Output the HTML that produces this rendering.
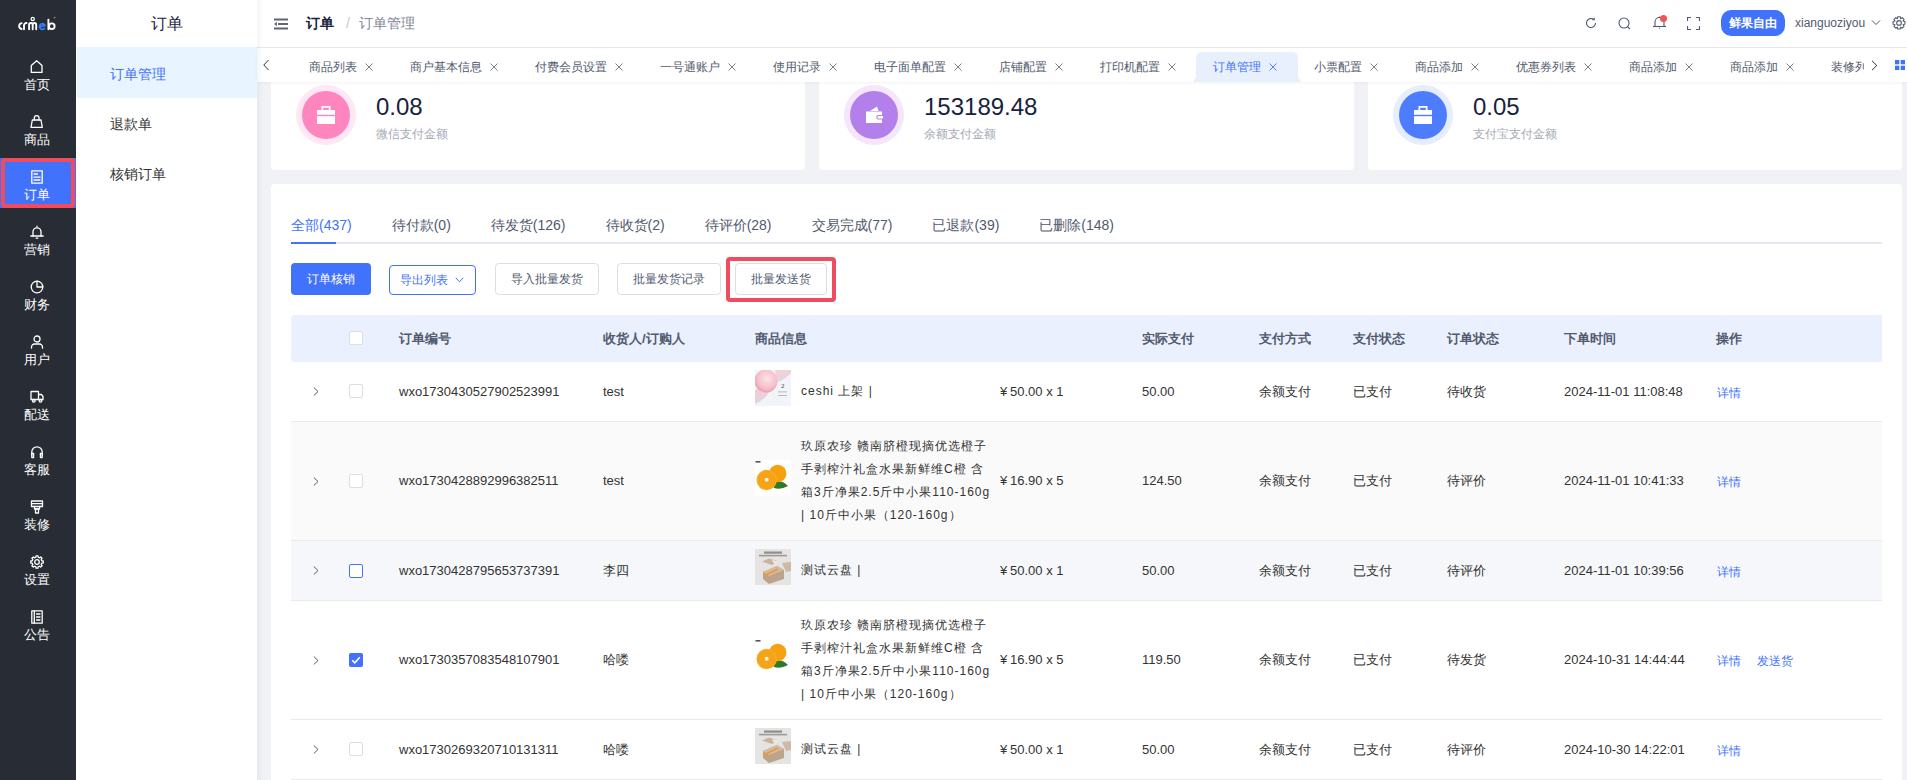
<!DOCTYPE html>
<html><head><meta charset="utf-8">
<style>
*{box-sizing:border-box;margin:0;padding:0}
html,body{width:1907px;height:780px;overflow:hidden;background:#f0f2f5;font-family:"Liberation Sans",sans-serif;color:#333}
.a{position:absolute;white-space:nowrap}
#sb{position:absolute;left:0;top:0;width:76px;height:780px;background:#282c34}
.si{position:absolute;left:0;width:76px;text-align:center;color:#fff;font-size:13px;line-height:16px;font-weight:500}
.si svg{position:absolute;left:30px;top:0;width:14px;height:14px}
.si span{position:absolute;left:-1px;width:76px;top:17px}
#sub{position:absolute;left:76px;top:0;width:181px;height:780px;background:#fff}
#hdr{position:absolute;left:257px;top:0;width:1650px;height:48px;background:#fff;border-bottom:1px solid #e8eaec}
#tabs{position:absolute;left:257px;top:48px;width:1650px;height:34px;background:#fff;box-shadow:0 1px 3px rgba(0,0,0,.05)}
.tb{position:absolute;top:9px;font-size:12px;line-height:20px;color:#515a6e}
.th{font-size:13px;line-height:20px;font-weight:bold;color:#515a6e}
.td{font-size:13px;line-height:20px;color:#333}
.lk{font-size:12px;line-height:20px;color:#4172fb}
.pn{font-size:12px;line-height:23.2px;letter-spacing:1px;color:#333}
.img-pink{background:linear-gradient(135deg,#f3b9c6 0%,#f7d2db 45%,#eef2f7 60%,#f3f5f9 100%)}
.img-orange{background:radial-gradient(circle at 62% 45%,#f7a21b 0,#f39c12 11px,transparent 12px),radial-gradient(circle at 38% 58%,#ffd56a 0,#f4a81d 10px,transparent 11px),#fff}
.img-box{background:linear-gradient(160deg,#d9d4cc 0%,#cfc6b8 40%,#b59a78 60%,#d6d0c6 100%)}
.card{position:absolute;background:#fff;border-radius:4px}
</style></head><body>

<!-- left dark sidebar -->
<div id="sb">
  <svg class="a" style="left:0;top:0" width="76" height="40" viewBox="0 0 76 40" fill="none" stroke="#fff" stroke-width="1.9" stroke-linecap="round">
    <path d="M21.6 23.1A3 3 0 0 0 21.6 29"/>
    <path d="M24 29.2V25.3A2.4 2.4 0 0 1 26.5 23"/>
    <path d="M29.1 29.2V24.8A1.8 1.8 0 0 1 32.7 24.8V29.2M32.7 24.8A1.75 1.75 0 0 1 36.2 24.8V29.2"/>
    <circle cx="32.7" cy="18.9" r="1.6" stroke-width="1.3"/>
    <path d="M40 26.9L44.9 25.4A2.8 2.8 0 1 0 44.5 28.4" stroke="#2f7ff6"/>
    <path d="M48.4 19.6V29.2"/><circle cx="51.8" cy="26.2" r="2.8"/>
    <circle cx="54.6" cy="17.6" r="0.9" fill="#888" stroke="none"/>
  </svg>
<div class="a" style="left:0;top:158px;width:76px;height:50px;background:#4172fb"></div>
<div class="si" style="top:60px"><svg width="14" height="14" viewBox="0 0 14 14" fill="none" stroke="#fff" stroke-width="1.3" stroke-linejoin="round" stroke-linecap="round"><path d="M1.3 12.4V5.6L6.65 0.8 12 5.6V12.4Z"/></svg><span>首页</span></div>
<div class="si" style="top:115px"><svg width="14" height="14" viewBox="0 0 14 14" fill="none" stroke="#fff" stroke-width="1.3" stroke-linejoin="round" stroke-linecap="round"><path d="M2.3 5H11L12.3 12.4H1Z"/><path d="M4.3 5V3a2.35 2.35 0 0 1 4.7 0V5"/></svg><span>商品</span></div>
<div class="si" style="top:170px"><svg width="14" height="14" viewBox="0 0 14 14" fill="none" stroke="#fff" stroke-width="1.3" stroke-linejoin="round" stroke-linecap="round"><path d="M1.8 0.8H12.2V13.2H1.8Z"/><path d="M4 4H7.5M4 7.2H10M4 10H10"/></svg><span>订单</span></div>
<div class="si" style="top:225px"><svg width="14" height="14" viewBox="0 0 14 14" fill="none" stroke="#fff" stroke-width="1.3" stroke-linejoin="round" stroke-linecap="round"><path d="M3 11V6.8a4 4 0 0 1 8 0V11"/><path d="M0.8 11H13.2"/><path d="M7 1.8V1.2"/><path d="M6.2 13.2H7.8"/></svg><span>营销</span></div>
<div class="si" style="top:280px"><svg width="14" height="14" viewBox="0 0 14 14" fill="none" stroke="#fff" stroke-width="1.3" stroke-linejoin="round" stroke-linecap="round"><circle cx="7" cy="7" r="5.8"/><path d="M7 1.2V7H12.8"/></svg><span>财务</span></div>
<div class="si" style="top:335px"><svg width="14" height="14" viewBox="0 0 14 14" fill="none" stroke="#fff" stroke-width="1.3" stroke-linejoin="round" stroke-linecap="round"><circle cx="7" cy="4" r="3"/><path d="M1.5 13.2V12a3 3 0 0 1 3-3H9.5a3 3 0 0 1 3 3V13.2"/></svg><span>用户</span></div>
<div class="si" style="top:390px"><svg width="14" height="14" viewBox="0 0 14 14" fill="none" stroke="#fff" stroke-width="1.3" stroke-linejoin="round" stroke-linecap="round"><path d="M1 1.5H8.5V9.5H1Z"/><path d="M8.5 4.5H11.5L13 6.5V9.5H8.5"/><circle cx="3.8" cy="10.8" r="1.3"/><circle cx="10.5" cy="10.8" r="1.3"/></svg><span>配送</span></div>
<div class="si" style="top:445px"><svg width="14" height="14" viewBox="0 0 14 14" fill="none" stroke="#fff" stroke-width="1.3" stroke-linejoin="round" stroke-linecap="round"><path d="M1.8 10V7a5.2 5.2 0 0 1 10.4 0V10"/><path d="M1.8 8.3H3.6V12.5H1.8Z"/><path d="M10.4 8.3H12.2V12.5H10.4Z"/></svg><span>客服</span></div>
<div class="si" style="top:500px"><svg width="14" height="14" viewBox="0 0 14 14" fill="none" stroke="#fff" stroke-width="1.3" stroke-linejoin="round" stroke-linecap="round"><path d="M1.5 1H12.5V6.5H1.5Z"/><path d="M1.5 3.7H12.5"/><path d="M4.5 6.5V9H9.5V6.5"/><path d="M5.5 9H8.5V13H5.5Z"/></svg><span>装修</span></div>
<div class="si" style="top:555px"><svg width="14" height="14" viewBox="0 0 14 14" fill="none" stroke="#fff" stroke-width="1.3" stroke-linejoin="round" stroke-linecap="round"><path d="M13.22 6.01L13.22 7.99L11.76 8.14L11.18 9.56L12.10 10.70L10.70 12.10L9.56 11.18L8.14 11.76L7.99 13.22L6.01 13.22L5.86 11.76L4.44 11.18L3.30 12.10L1.90 10.70L2.82 9.56L2.24 8.14L0.78 7.99L0.78 6.01L2.24 5.86L2.82 4.44L1.90 3.30L3.30 1.90L4.44 2.82L5.86 2.24L6.01 0.78L7.99 0.78L8.14 2.24L9.56 2.82L10.70 1.90L12.10 3.30L11.18 4.44L11.76 5.86Z"/><circle cx="7" cy="7" r="2.3"/></svg><span>设置</span></div>
<div class="si" style="top:610px"><svg width="14" height="14" viewBox="0 0 14 14" fill="none" stroke="#fff" stroke-width="1.3" stroke-linejoin="round" stroke-linecap="round"><path d="M1.8 0.8H12.2V13.2H1.8Z"/><path d="M4.3 0.8V13.2"/><path d="M6.5 4H10M6.5 7H10M6.5 10H10"/></svg><span>公告</span></div>
<div class="a" style="left:1px;top:158px;width:74px;height:50px;border:4px solid #f04b5f;border-radius:4px"></div>
</div>

<!-- sub menu -->
<div id="sub">
  <div class="a" style="left:0;top:13px;width:181px;text-align:center;font-size:16px;line-height:22px;color:#17233d">订单</div>
  <div class="a" style="left:1px;top:47px;width:180px;height:51px;background:#e8f4ff"></div>
  <div class="a" style="left:34px;top:63px;font-size:14px;line-height:22px;color:#4172fb">订单管理</div>
  <div class="a" style="left:34px;top:113px;font-size:14px;line-height:22px;color:#333">退款单</div>
  <div class="a" style="left:34px;top:163px;font-size:14px;line-height:22px;color:#333">核销订单</div>
</div>

<!-- content -->
<div class="card" style="left:271px;top:40px;width:534px;height:130px"></div>
<div class="a" style="left:296px;top:85px;width:60px;height:60px;border-radius:50%;background:#ffe8f3"></div>
<div class="a" style="left:302px;top:91px;width:48px;height:48px;border-radius:50%;background:#ff85bf"></div>
<svg class="a" style="left:317px;top:106px" width="18" height="18" viewBox="0 0 18 18" fill="#fff"><path d="M4.5 0H13.5V4H11.8V1.7H6.2V4H4.5Z"/><rect x="0" y="4" width="18" height="4.8"/><rect x="0" y="10.2" width="18" height="7.8"/></svg>
<div class="a" style="left:376px;top:93px;font-size:24px;line-height:28px;color:#17233d">0.08</div>
<div class="a" style="left:376px;top:124px;font-size:12px;line-height:20px;color:#a6abb6">微信支付金额</div>
<div class="card" style="left:819px;top:40px;width:535px;height:130px"></div>
<div class="a" style="left:844px;top:85px;width:60px;height:60px;border-radius:50%;background:#f3e6fd"></div>
<div class="a" style="left:850px;top:91px;width:48px;height:48px;border-radius:50%;background:#b37feb"></div>
<svg class="a" style="left:865px;top:105px" width="19" height="19" viewBox="0 0 19 19" fill="#fff"><path d="M5 6L12 1.5L13.5 6Z"/><path d="M1 6.5H17V10H13.5a2.2 2.2 0 0 0 0 4.4H17V18H1Z"/><path d="M13.8 10.9H18V13.5H13.8a1.3 1.3 0 0 1 0-2.6Z"/></svg>
<div class="a" style="left:924px;top:93px;font-size:24px;line-height:28px;color:#17233d">153189.48</div>
<div class="a" style="left:924px;top:124px;font-size:12px;line-height:20px;color:#a6abb6">余额支付金额</div>
<div class="card" style="left:1368px;top:40px;width:534px;height:130px"></div>
<div class="a" style="left:1393px;top:85px;width:60px;height:60px;border-radius:50%;background:#e5edfe"></div>
<div class="a" style="left:1399px;top:91px;width:48px;height:48px;border-radius:50%;background:#4d7cfe"></div>
<svg class="a" style="left:1414px;top:106px" width="18" height="18" viewBox="0 0 18 18" fill="#fff"><path d="M4.5 0H13.5V4H11.8V1.7H6.2V4H4.5Z"/><rect x="0" y="4" width="18" height="4.8"/><rect x="0" y="10.2" width="18" height="7.8"/></svg>
<div class="a" style="left:1473px;top:93px;font-size:24px;line-height:28px;color:#17233d">0.05</div>
<div class="a" style="left:1473px;top:124px;font-size:12px;line-height:20px;color:#a6abb6">支付宝支付金额</div>
<div class="card" style="left:271px;top:184px;width:1631px;height:640px"></div>

<div class="a" style="left:291px;top:214px;display:flex;gap:40px;font-size:14px;line-height:22px;color:#515a6e"><span style="color:#4172fb">全部(437)</span><span style="color:#515a6e">待付款(0)</span><span style="color:#515a6e">待发货(126)</span><span style="color:#515a6e">待收货(2)</span><span style="color:#515a6e">待评价(28)</span><span style="color:#515a6e">交易完成(77)</span><span style="color:#515a6e">已退款(39)</span><span style="color:#515a6e">已删除(148)</span></div>
<div class="a" style="left:291px;top:242px;width:1591px;height:2px;background:#e4e7ed"></div>
<div class="a" style="left:291px;top:242px;width:45px;height:2px;background:#4172fb"></div>
<div class="a" style="left:291px;top:263px;width:80px;height:32px;border-radius:4px;background:#4172fb;color:#fff;font-size:12px;line-height:32px;text-align:center">订单核销</div>
<div class="a" style="left:389px;top:265px;width:87px;height:30px;border-radius:4px;border:1px solid #4172fb;color:#4172fb;font-size:12px;line-height:28px;padding-left:10px">导出列表</div>
<svg class="a" style="left:455px;top:277px" width="9" height="6" viewBox="0 0 9 6" fill="none" stroke="#4172fb" stroke-width="1"><path d="M0.8 0.8L4.5 4.8L8.2 0.8"/></svg>
<div class="a" style="left:495px;top:263px;width:104px;height:32px;border-radius:4px;border:1px solid #dcdee2;color:#515a6e;font-size:12px;line-height:30px;text-align:center">导入批量发货</div>
<div class="a" style="left:617px;top:263px;width:104px;height:32px;border-radius:4px;border:1px solid #dcdee2;color:#515a6e;font-size:12px;line-height:30px;text-align:center">批量发货记录</div>
<div class="a" style="left:735px;top:263px;width:92px;height:32px;border-radius:4px;border:1px solid #dcdee2;color:#515a6e;font-size:12px;line-height:30px;text-align:center">批量发送货</div>
<div class="a" style="left:726px;top:257px;width:110px;height:45px;border:4px solid #f04b5f;border-radius:4px"></div>
<div class="a" style="left:291px;top:315px;width:1591px;height:47px;background:#eaf0fe;border-radius:4px 0 0 4px"></div>
<div class="a" style="left:349px;top:331px;width:14px;height:14px;border-radius:2px;border:1px solid #dcdee2;background:#fff"></div>
<div class="a th" style="left:399px;top:329px">订单编号</div>
<div class="a th" style="left:603px;top:329px">收货人/订购人</div>
<div class="a th" style="left:755px;top:329px">商品信息</div>
<div class="a th" style="left:1142px;top:329px">实际支付</div>
<div class="a th" style="left:1259px;top:329px">支付方式</div>
<div class="a th" style="left:1353px;top:329px">支付状态</div>
<div class="a th" style="left:1447px;top:329px">订单状态</div>
<div class="a th" style="left:1564px;top:329px">下单时间</div>
<div class="a th" style="left:1716px;top:329px">操作</div>
<div class="a" style="left:291px;top:362px;width:1591px;height:60px;background:#fff;border-bottom:1px solid #e8eaec"></div>
<svg class="a" style="left:313px;top:387.0px" width="6" height="9" viewBox="0 0 6 9" fill="none" stroke="#515a6e" stroke-width="1"><path d="M0.8 0.5L5 4.5L0.8 8.5"/></svg>
<div class="a" style="left:349px;top:384px;width:14px;height:14px;border-radius:2px;border:1px solid #dcdee2;background:#fff"></div>
<div class="a td" style="left:399px;top:381.5px">wxo1730430527902523991</div>
<div class="a td" style="left:603px;top:381.5px">test</div>
<div class="a td" style="left:1142px;top:381.5px">50.00</div>
<div class="a td" style="left:1259px;top:381.5px">余额支付</div>
<div class="a td" style="left:1353px;top:381.5px">已支付</div>
<div class="a td" style="left:1447px;top:381.5px">待收货</div>
<div class="a td" style="left:1564px;top:381.5px">2024-11-01 11:08:48</div>
<div class="a td" style="left:1000px;top:381.5px">¥</div><div class="a td" style="left:1010px;top:381.5px">50.00 x 1</div>
<div class="a lk" style="left:1717px;top:382.5px">详情</div>
<div class="a" style="left:755px;top:370.0px;width:36px;height:36px"><svg width="36" height="36" viewBox="0 0 36 36"><defs><radialGradient id="pg" cx="0.55" cy="0.4" r="0.6"><stop offset="0" stop-color="#fde2e8"/><stop offset="0.7" stop-color="#f6bfcb"/><stop offset="1" stop-color="#e9a0b0"/></radialGradient></defs><rect width="36" height="36" fill="#f1f5fa"/><path d="M20 0H36V3Q30 10 22 12Z" fill="#ecd3da"/><path d="M0 20Q8 17 14 22Q10 30 0 34Z" fill="#ecd0d8"/><circle cx="11" cy="11" r="11.5" fill="url(#pg)"/><text x="26" y="18" font-family="Liberation Serif" font-size="7" fill="#444">2</text><rect x="23" y="21.5" width="9" height="0.8" fill="#aaa"/><rect x="23" y="25" width="9" height="0.8" fill="#aaa"/></svg></div>
<div class="a pn" style="left:801px;top:379.9px">ceshi 上架 |</div>
<div class="a" style="left:291px;top:422px;width:1591px;height:119px;background:#fafafa;border-bottom:1px solid #e8eaec"></div>
<svg class="a" style="left:313px;top:476.5px" width="6" height="9" viewBox="0 0 6 9" fill="none" stroke="#515a6e" stroke-width="1"><path d="M0.8 0.5L5 4.5L0.8 8.5"/></svg>
<div class="a" style="left:349px;top:474px;width:14px;height:14px;border-radius:2px;border:1px solid #dcdee2;background:#fff"></div>
<div class="a td" style="left:399px;top:471.0px">wxo1730428892996382511</div>
<div class="a td" style="left:603px;top:471.0px">test</div>
<div class="a td" style="left:1142px;top:471.0px">124.50</div>
<div class="a td" style="left:1259px;top:471.0px">余额支付</div>
<div class="a td" style="left:1353px;top:471.0px">已支付</div>
<div class="a td" style="left:1447px;top:471.0px">待评价</div>
<div class="a td" style="left:1564px;top:471.0px">2024-11-01 10:41:33</div>
<div class="a td" style="left:1000px;top:471.0px">¥</div><div class="a td" style="left:1010px;top:471.0px">16.90 x 5</div>
<div class="a lk" style="left:1717px;top:472.0px">详情</div>
<div class="a" style="left:755px;top:459.5px;width:36px;height:36px"><svg width="36" height="36" viewBox="0 0 36 36"><rect width="36" height="36" fill="#fff"/><rect x="0.5" y="1" width="5" height="1.6" fill="#555"/><path d="M19 23Q26 19 33 26Q26 30 19 28Z" fill="#2f7a2a"/><circle cx="22.7" cy="13.5" r="8.7" fill="#f6a10f"/><circle cx="11.7" cy="20" r="10.2" fill="#f7b21e"/><circle cx="11.7" cy="20" r="9.2" fill="#f5a31a"/><circle cx="11.7" cy="19.8" r="2" fill="#fff3cf"/></svg></div>
<div class="a pn" style="left:801px;top:434.6px">玖原农珍 赣南脐橙现摘优选橙子<br>手剥榨汁礼盒水果新鲜维C橙 含<br>箱3斤净果2.5斤中小果110-160g<br>| 10斤中小果（120-160g）</div>
<div class="a" style="left:291px;top:541px;width:1591px;height:60px;background:#f5f7fa;border-bottom:1px solid #e8eaec"></div>
<svg class="a" style="left:313px;top:566.0px" width="6" height="9" viewBox="0 0 6 9" fill="none" stroke="#515a6e" stroke-width="1"><path d="M0.8 0.5L5 4.5L0.8 8.5"/></svg>
<div class="a" style="left:349px;top:564px;width:14px;height:14px;border-radius:2px;border:1px solid #4172fb;background:#fff"></div>
<div class="a td" style="left:399px;top:560.5px">wxo1730428795653737391</div>
<div class="a td" style="left:603px;top:560.5px">李四</div>
<div class="a td" style="left:1142px;top:560.5px">50.00</div>
<div class="a td" style="left:1259px;top:560.5px">余额支付</div>
<div class="a td" style="left:1353px;top:560.5px">已支付</div>
<div class="a td" style="left:1447px;top:560.5px">待评价</div>
<div class="a td" style="left:1564px;top:560.5px">2024-11-01 10:39:56</div>
<div class="a td" style="left:1000px;top:560.5px">¥</div><div class="a td" style="left:1010px;top:560.5px">50.00 x 1</div>
<div class="a lk" style="left:1717px;top:561.5px">详情</div>
<div class="a" style="left:755px;top:549.0px;width:36px;height:36px"><svg width="36" height="36" viewBox="0 0 36 36"><rect width="36" height="36" fill="#e5e4e2"/><rect x="9" y="2.5" width="18" height="2.2" fill="#6a6a6a" opacity="0.7"/><rect x="4" y="5.8" width="28" height="1.6" fill="#6a6a6a" opacity="0.6"/><path d="M7 12.5L14 9.5L24 12.5L17 16Z" fill="#c9b3a0"/><path d="M17 11L24 12.5V14.5L19 15Z" fill="#ece8e4"/><path d="M27 14L36 13V22L31 23Z" fill="#cdb9a6"/><path d="M8 23L22 17L29 21V30L14 35L8 30Z" fill="#bca38c"/><path d="M8 23L22 17L29 21L14 27Z" fill="#d1bba6"/><path d="M8.5 26L22 19.5L24 20.5L10 27.5Z" fill="#f29a2e"/></svg></div>
<div class="a pn" style="left:801px;top:558.9px">测试云盘 |</div>
<div class="a" style="left:291px;top:601px;width:1591px;height:119px;background:#fff;border-bottom:1px solid #e8eaec"></div>
<svg class="a" style="left:313px;top:655.5px" width="6" height="9" viewBox="0 0 6 9" fill="none" stroke="#515a6e" stroke-width="1"><path d="M0.8 0.5L5 4.5L0.8 8.5"/></svg>
<div class="a" style="left:349px;top:653px;width:14px;height:14px;border-radius:2px;background:#4172fb"></div><svg class="a" style="left:349px;top:653px" width="14" height="14" viewBox="0 0 14 14" fill="none" stroke="#fff" stroke-width="1.6"><path d="M3.2 7.2L5.8 9.8L10.8 4.3"/></svg>
<div class="a td" style="left:399px;top:650.0px">wxo1730357083548107901</div>
<div class="a td" style="left:603px;top:650.0px">哈喽</div>
<div class="a td" style="left:1142px;top:650.0px">119.50</div>
<div class="a td" style="left:1259px;top:650.0px">余额支付</div>
<div class="a td" style="left:1353px;top:650.0px">已支付</div>
<div class="a td" style="left:1447px;top:650.0px">待发货</div>
<div class="a td" style="left:1564px;top:650.0px">2024-10-31 14:44:44</div>
<div class="a td" style="left:1000px;top:650.0px">¥</div><div class="a td" style="left:1010px;top:650.0px">16.90 x 5</div>
<div class="a lk" style="left:1717px;top:651.0px">详情</div>
<div class="a lk" style="left:1757px;top:651.0px">发送货</div>
<div class="a" style="left:755px;top:638.5px;width:36px;height:36px"><svg width="36" height="36" viewBox="0 0 36 36"><rect width="36" height="36" fill="#fff"/><rect x="0.5" y="1" width="5" height="1.6" fill="#555"/><path d="M19 23Q26 19 33 26Q26 30 19 28Z" fill="#2f7a2a"/><circle cx="22.7" cy="13.5" r="8.7" fill="#f6a10f"/><circle cx="11.7" cy="20" r="10.2" fill="#f7b21e"/><circle cx="11.7" cy="20" r="9.2" fill="#f5a31a"/><circle cx="11.7" cy="19.8" r="2" fill="#fff3cf"/></svg></div>
<div class="a pn" style="left:801px;top:613.6px">玖原农珍 赣南脐橙现摘优选橙子<br>手剥榨汁礼盒水果新鲜维C橙 含<br>箱3斤净果2.5斤中小果110-160g<br>| 10斤中小果（120-160g）</div>
<div class="a" style="left:291px;top:720px;width:1591px;height:60px;background:#fff;border-bottom:1px solid #e8eaec"></div>
<svg class="a" style="left:313px;top:745.0px" width="6" height="9" viewBox="0 0 6 9" fill="none" stroke="#515a6e" stroke-width="1"><path d="M0.8 0.5L5 4.5L0.8 8.5"/></svg>
<div class="a" style="left:349px;top:742px;width:14px;height:14px;border-radius:2px;border:1px solid #dcdee2;background:#fff"></div>
<div class="a td" style="left:399px;top:739.5px">wxo1730269320710131311</div>
<div class="a td" style="left:603px;top:739.5px">哈喽</div>
<div class="a td" style="left:1142px;top:739.5px">50.00</div>
<div class="a td" style="left:1259px;top:739.5px">余额支付</div>
<div class="a td" style="left:1353px;top:739.5px">已支付</div>
<div class="a td" style="left:1447px;top:739.5px">待评价</div>
<div class="a td" style="left:1564px;top:739.5px">2024-10-30 14:22:01</div>
<div class="a td" style="left:1000px;top:739.5px">¥</div><div class="a td" style="left:1010px;top:739.5px">50.00 x 1</div>
<div class="a lk" style="left:1717px;top:740.5px">详情</div>
<div class="a" style="left:755px;top:728.0px;width:36px;height:36px"><svg width="36" height="36" viewBox="0 0 36 36"><rect width="36" height="36" fill="#e5e4e2"/><rect x="9" y="2.5" width="18" height="2.2" fill="#6a6a6a" opacity="0.7"/><rect x="4" y="5.8" width="28" height="1.6" fill="#6a6a6a" opacity="0.6"/><path d="M7 12.5L14 9.5L24 12.5L17 16Z" fill="#c9b3a0"/><path d="M17 11L24 12.5V14.5L19 15Z" fill="#ece8e4"/><path d="M27 14L36 13V22L31 23Z" fill="#cdb9a6"/><path d="M8 23L22 17L29 21V30L14 35L8 30Z" fill="#bca38c"/><path d="M8 23L22 17L29 21L14 27Z" fill="#d1bba6"/><path d="M8.5 26L22 19.5L24 20.5L10 27.5Z" fill="#f29a2e"/></svg></div>
<div class="a pn" style="left:801px;top:737.9px">测试云盘 |</div>

<!-- header -->
<div id="hdr">
  <svg class="a" style="left:17px;top:18px" width="14" height="12" viewBox="0 0 14 12"><rect x="0" y="0.5" width="14" height="2" fill="#5f6570"/><rect x="4" y="5" width="10" height="2" fill="#5f6570"/><path d="M0 6L3 4V8Z" fill="#5f6570"/><rect x="0" y="9.5" width="14" height="2" fill="#5f6570"/></svg>
  <div class="a" style="left:49px;top:12px;font-size:14px;line-height:22px;font-weight:bold;color:#17233d">订单</div>
  <div class="a" style="left:89px;top:12px;font-size:14px;line-height:22px;color:#c5c8ce">/</div>
  <div class="a" style="left:102px;top:12px;font-size:14px;line-height:22px;color:#808695">订单管理</div>
  <svg class="a" style="left:1328px;top:17px" width="12" height="12" viewBox="0 0 12 12" fill="none" stroke="#515a6e" stroke-width="1.1"><path d="M10.5 6A4.5 4.5 0 1 1 8.8 2.5"/><path d="M9.2 0.8V2.8H7.2" stroke-linejoin="miter"/></svg>
  <svg class="a" style="left:1361px;top:17px" width="13" height="13" viewBox="0 0 13 13" fill="none" stroke="#515a6e" stroke-width="1.1"><circle cx="6" cy="6" r="5"/><path d="M9.6 9.6L12 12"/></svg>
  <svg class="a" style="left:1395px;top:14px" width="15" height="15" viewBox="0 0 15 15" fill="none" stroke="#515a6e" stroke-width="1.1"><path d="M3 12.5V8a4.5 4.5 0 0 1 9 0V12.5"/><path d="M1 12.5H14"/><path d="M7.5 3.5V2.5"/><path d="M7 14.3H8"/></svg>
  <div class="a" style="left:1403px;top:15px;width:7px;height:7px;border-radius:50%;background:#f05454"></div>
  <svg class="a" style="left:1430px;top:17px" width="13" height="13" viewBox="0 0 13 13" fill="none" stroke="#515a6e" stroke-width="1.1"><path d="M0.5 4V0.5H4M9 0.5H12.5V4M12.5 9V12.5H9M4 12.5H0.5V9"/></svg>
  <div class="a" style="left:1464px;top:10px;width:64px;height:26px;border-radius:10px;background:#4172fb;color:#fff;font-size:12px;line-height:26px;text-align:center;font-weight:bold">鲜果自由</div>
  <div class="a" style="left:1538px;top:14px;font-size:12px;line-height:18px;color:#515a6e">xianguoziyou</div>
  <svg class="a" style="left:1614px;top:19px" width="10" height="7" viewBox="0 0 10 7" fill="none" stroke="#515a6e" stroke-width="1"><path d="M1 1.5L5 5.5L9 1.5"/></svg>
  <svg class="a" style="left:1635px;top:16px" width="14" height="14" viewBox="0 0 14 14" fill="none" stroke="#515a6e" stroke-width="1.1"><path d="M5.8 0.8H8.2L8.7 2.6L10.3 1.7L12 3.4L11.1 5L12.9 5.6V8.2L11.1 8.8L12 10.4L10.3 12.1L8.7 11.2L8.2 13H5.8L5.3 11.2L3.7 12.1L2 10.4L2.9 8.8L1.1 8.2V5.6L2.9 5L2 3.4L3.7 1.7L5.3 2.6Z"/><circle cx="7" cy="6.9" r="2.3"/></svg>
</div>

<!-- tabs bar -->
<div id="tabs">
<svg class="a" style="left:6px;top:11px" width="7" height="12" viewBox="0 0 7 12" fill="none" stroke="#333" stroke-width="1"><path d="M5.5 1L0.8 6L5.5 11"/></svg>
<div class="a" style="left:18px;top:0;width:1589px;height:34px;overflow:hidden">
<div class="tb" style="left:34.2px;color:#515a6e">商品列表</div>
<svg class="a" style="left:90.2px;top:14.5px" width="8" height="8" viewBox="0 0 8 8" stroke="#6b7280" stroke-width="0.9"><path d="M0.5 0.5L7.5 7.5M7.5 0.5L0.5 7.5"/></svg>
<div class="tb" style="left:135.2px;color:#515a6e">商户基本信息</div>
<svg class="a" style="left:215.2px;top:14.5px" width="8" height="8" viewBox="0 0 8 8" stroke="#6b7280" stroke-width="0.9"><path d="M0.5 0.5L7.5 7.5M7.5 0.5L0.5 7.5"/></svg>
<div class="tb" style="left:260.1px;color:#515a6e">付费会员设置</div>
<svg class="a" style="left:340.1px;top:14.5px" width="8" height="8" viewBox="0 0 8 8" stroke="#6b7280" stroke-width="0.9"><path d="M0.5 0.5L7.5 7.5M7.5 0.5L0.5 7.5"/></svg>
<div class="tb" style="left:385.1px;color:#515a6e">一号通账户</div>
<svg class="a" style="left:453.1px;top:14.5px" width="8" height="8" viewBox="0 0 8 8" stroke="#6b7280" stroke-width="0.9"><path d="M0.5 0.5L7.5 7.5M7.5 0.5L0.5 7.5"/></svg>
<div class="tb" style="left:498.0px;color:#515a6e">使用记录</div>
<svg class="a" style="left:554.0px;top:14.5px" width="8" height="8" viewBox="0 0 8 8" stroke="#6b7280" stroke-width="0.9"><path d="M0.5 0.5L7.5 7.5M7.5 0.5L0.5 7.5"/></svg>
<div class="tb" style="left:599.0px;color:#515a6e">电子面单配置</div>
<svg class="a" style="left:679.0px;top:14.5px" width="8" height="8" viewBox="0 0 8 8" stroke="#6b7280" stroke-width="0.9"><path d="M0.5 0.5L7.5 7.5M7.5 0.5L0.5 7.5"/></svg>
<div class="tb" style="left:724.0px;color:#515a6e">店铺配置</div>
<svg class="a" style="left:780.0px;top:14.5px" width="8" height="8" viewBox="0 0 8 8" stroke="#6b7280" stroke-width="0.9"><path d="M0.5 0.5L7.5 7.5M7.5 0.5L0.5 7.5"/></svg>
<div class="tb" style="left:824.9px;color:#515a6e">打印机配置</div>
<svg class="a" style="left:892.9px;top:14.5px" width="8" height="8" viewBox="0 0 8 8" stroke="#6b7280" stroke-width="0.9"><path d="M0.5 0.5L7.5 7.5M7.5 0.5L0.5 7.5"/></svg>
<svg class="a" style="left:917.9px;top:4px" width="108" height="30" viewBox="0 0 108 30"><path d="M0 30L3 24V6Q3 0 9 0H99Q105 0 105 6V24L108 30Z" fill="#e8f0fe"/></svg>
<div class="tb" style="left:937.9px;color:#4172fb">订单管理</div>
<svg class="a" style="left:993.9px;top:14.5px" width="8" height="8" viewBox="0 0 8 8" stroke="#4172fb" stroke-width="0.9"><path d="M0.5 0.5L7.5 7.5M7.5 0.5L0.5 7.5"/></svg>
<div class="tb" style="left:1038.8px;color:#515a6e">小票配置</div>
<svg class="a" style="left:1094.8px;top:14.5px" width="8" height="8" viewBox="0 0 8 8" stroke="#6b7280" stroke-width="0.9"><path d="M0.5 0.5L7.5 7.5M7.5 0.5L0.5 7.5"/></svg>
<div class="tb" style="left:1139.8px;color:#515a6e">商品添加</div>
<svg class="a" style="left:1195.8px;top:14.5px" width="8" height="8" viewBox="0 0 8 8" stroke="#6b7280" stroke-width="0.9"><path d="M0.5 0.5L7.5 7.5M7.5 0.5L0.5 7.5"/></svg>
<div class="tb" style="left:1240.8px;color:#515a6e">优惠券列表</div>
<svg class="a" style="left:1308.8px;top:14.5px" width="8" height="8" viewBox="0 0 8 8" stroke="#6b7280" stroke-width="0.9"><path d="M0.5 0.5L7.5 7.5M7.5 0.5L0.5 7.5"/></svg>
<div class="tb" style="left:1353.7px;color:#515a6e">商品添加</div>
<svg class="a" style="left:1409.7px;top:14.5px" width="8" height="8" viewBox="0 0 8 8" stroke="#6b7280" stroke-width="0.9"><path d="M0.5 0.5L7.5 7.5M7.5 0.5L0.5 7.5"/></svg>
<div class="tb" style="left:1454.7px;color:#515a6e">商品添加</div>
<svg class="a" style="left:1510.7px;top:14.5px" width="8" height="8" viewBox="0 0 8 8" stroke="#6b7280" stroke-width="0.9"><path d="M0.5 0.5L7.5 7.5M7.5 0.5L0.5 7.5"/></svg>
<div class="tb" style="left:1555.6px;color:#515a6e">装修列表</div>
<svg class="a" style="left:1611.6px;top:14.5px" width="8" height="8" viewBox="0 0 8 8" stroke="#6b7280" stroke-width="0.9"><path d="M0.5 0.5L7.5 7.5M7.5 0.5L0.5 7.5"/></svg>
</div>
<svg class="a" style="left:1614px;top:12px" width="7" height="11" viewBox="0 0 7 11" fill="none" stroke="#333" stroke-width="1"><path d="M1 0.8L5.8 5.5L1 10.2"/></svg>
<svg class="a" style="left:1638px;top:12px" width="10" height="10" viewBox="0 0 10 10" fill="#4172fb"><rect x="0" y="0" width="4.3" height="4.3"/><rect x="5.7" y="0" width="4.3" height="4.3"/><rect x="0" y="5.7" width="4.3" height="4.3"/><rect x="5.7" y="5.7" width="4.3" height="4.3"/></svg>
</div>

<div class="a" style="left:257px;top:0;width:6px;height:780px;background:linear-gradient(to right,rgba(0,20,60,.045),rgba(0,20,60,0))"></div>
</body></html>
